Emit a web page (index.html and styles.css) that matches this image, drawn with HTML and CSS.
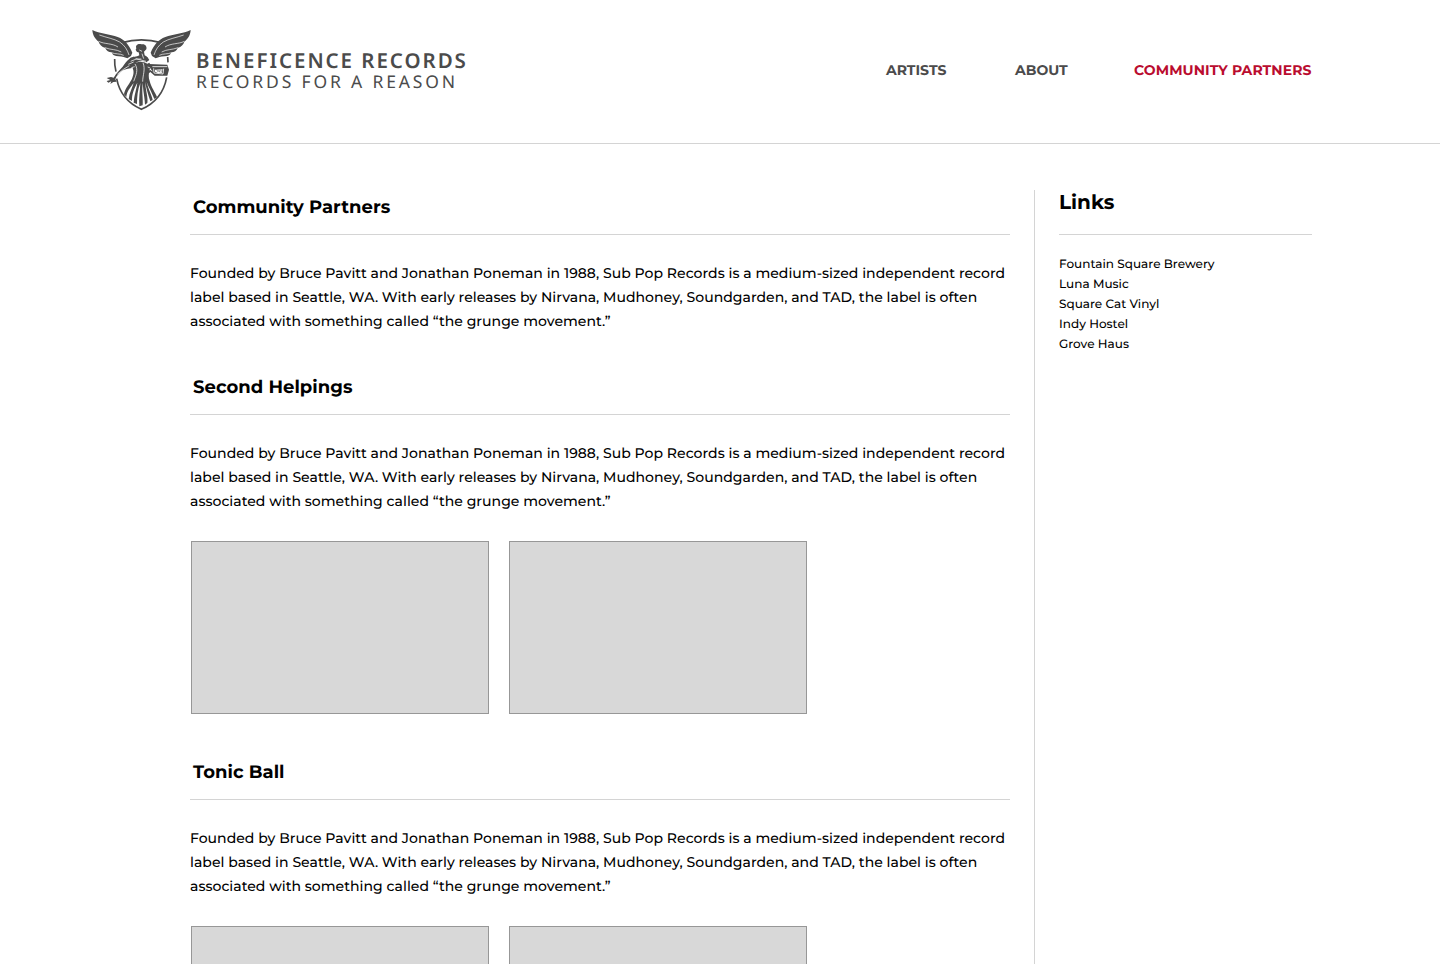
FILE: index.html
```html
<!DOCTYPE html>
<html lang="en">
<head>
<meta charset="utf-8">
<title>Beneficence Records</title>
<link rel="stylesheet" href="styles.css">
</head>
<body>
<header class="header">
  <div class="brand">
    <svg class="logo" viewBox="0 0 330 276" fill="#4b4b4b" aria-hidden="true">
      <defs>
        <g id="wing">
          <path d="M19 18 C40 29 72 30 95 39 C116 47 129 62 139 86 L135 96 L124 103 L113 99 C104 96 91 98 84 94 C80 92 78 88 76 85 C69 85 61 80 57 71 C48 69 40 61 38 53 C28 46 20 34 19 18Z"/>
          <path fill="none" stroke="#fff" stroke-width="2" d="M40 33 C62 41 84 44 101 54 C116 64 124 77 129 93 M38 52 C56 61 78 57 96 69 M57 71 C74 78 90 75 106 84 M76 86 C88 91 101 88 113 94"/>
        </g>
      </defs>
      <path fill="none" stroke="#4b4b4b" stroke-width="5" d="M108 56 Q166 39 225 56 M86 105 Q85 122 90 143 M92 164 C101 211 126 238 166 256 C207 238 234 204 242 160 M245 99 L246 115"/>
      <use href="#wing"/>
      <use href="#wing" transform="matrix(-1 0 0 1 333 0)"/>
      <path d="M151 73 C147 63 157 58 166 61 C177 58 184 67 181 76 L174 83 L176 94 C184 97 187 103 190 108 L181 115 C169 108 155 111 143 121 L138 132 L122 135 C109 137 99 148 91 158 L88 166 L92 173 L82 174 L73 180 L76 172 L67 176 L62 171 L73 168 L62 162 L75 159 L83 161 C92 146 102 137 110 128 C117 120 120 112 132 103 C139 97 152 99 160 94 L158 85 C151 86 151 79 149 77Z"/>
      <path fill="none" stroke="#fff" stroke-width="2.2" d="M160 78 L168 82 M168 89 L173 104 M134 112 Q151 102 166 105 M127 121 L143 114 M94 151 Q113 134 130 125 M149 104 L180 112"/>
      <path d="M136 123 C153 111 171 110 184 119 L190 116 L196 127 L190 139 C188 151 187 161 191 171 C195 189 209 208 213 219 L205 225 C197 204 188 190 182 174 C188 199 198 215 200 228 L193 232 C186 211 181 194 177 174 C179 199 187 222 184 237 L177 242 C176 216 170 198 171 176 C166 198 172 221 170 244 L160 247 C158 223 162 199 163 177 C155 196 153 219 153 240 L143 236 C145 212 151 197 154 176 C144 195 137 211 138 231 L128 225 C130 207 139 191 143 177 C132 191 122 204 121 219 L114 211 C116 193 134 176 139 161 C146 144 142 136 136 123Z"/>
      <path fill="none" stroke="#fff" stroke-width="2.2" d="M147 120 C158 138 150 153 143 172 M171 116 C179 136 170 154 170 173 M136 131 L146 128 M185 129 L193 132"/>
      <path d="M188 120 L244 122 L249 137 L244 155 L206 155 L193 144 L187 149 L190 138 L196 139Z"/>
      <path fill="none" stroke="#fff" stroke-width="2.5" d="M199 128 L244 128 M203 133 L204 147 L231 150 L233 134 M194 137 L199 141"/>
      <path fill="#fff" d="M207 137 L230 136 L227 147 L215 147 L207 143Z"/>
      <path fill="none" stroke="#4b4b4b" stroke-width="2" d="M212 137 L216 143 L219 139 L222 145 M224 137 L226 143"/>
    </svg>
    <div class="wordmark">
      <div class="name">BENEFICENCE RECORDS</div>
      <div class="tagline">RECORDS FOR A REASON</div>
    </div>
  </div>
  <nav class="nav">
    <a class="artists">ARTISTS</a>
    <a class="about">ABOUT</a>
    <a class="active">COMMUNITY PARTNERS</a>
  </nav>
</header>
<div class="page">
  <main class="main">
    <section>
      <h2>Community Partners</h2>
      <p>Founded by Bruce Pavitt and Jonathan Poneman in 1988, Sub Pop Records is a medium-sized independent record label based in Seattle, WA. With early releases by Nirvana, Mudhoney, Soundgarden, and TAD, the label is often associated with something called “the grunge movement.”</p>
    </section>
    <section>
      <h2>Second Helpings</h2>
      <p>Founded by Bruce Pavitt and Jonathan Poneman in 1988, Sub Pop Records is a medium-sized independent record label based in Seattle, WA. With early releases by Nirvana, Mudhoney, Soundgarden, and TAD, the label is often associated with something called “the grunge movement.”</p>
      <div class="gallery"><div class="photo"></div><div class="photo"></div></div>
    </section>
    <section>
      <h2>Tonic Ball</h2>
      <p>Founded by Bruce Pavitt and Jonathan Poneman in 1988, Sub Pop Records is a medium-sized independent record label based in Seattle, WA. With early releases by Nirvana, Mudhoney, Soundgarden, and TAD, the label is often associated with something called “the grunge movement.”</p>
      <div class="gallery"><div class="photo"></div><div class="photo"></div></div>
    </section>
  </main>
  <aside class="links">
    <h3>Links</h3>
    <ul>
      <li>Fountain Square Brewery</li>
      <li>Luna Music</li>
      <li>Square Cat Vinyl</li>
      <li>Indy Hostel</li>
      <li>Grove Haus</li>
    </ul>
  </aside>
</div>
</body>
</html>
```
FILE: styles.css
```css
* { box-sizing: border-box; }
body { margin: 0; height: 964px; overflow: hidden; background: #fff; color: #000; font-family: Montserrat, Inter, sans-serif; text-rendering: geometricPrecision; }
.header { height: 144px; border-bottom: 1px solid #d4d4d4; display: flex; justify-content: space-between; padding: 24px 128px 0 86px; white-space: nowrap; }
.brand { display: flex; }
.logo { width: 110px; height: 92px; display: block; }
.wordmark { font-family: "Noto Sans", sans-serif; color: #4b4b4b; padding-top: 25px; }
.name { font-size: 20.5px; font-weight: 600; line-height: 24px; letter-spacing: 1.95px; }
.tagline { font-size: 17.5px; line-height: 18px; letter-spacing: 2.84px; }
.nav { display: flex; height: 92px; align-items: center; font-size: 14px; font-weight: 700; color: #4b4b4b; }
.artists { width: 129px; }
.about { width: 119px; }
.active { width: 178px; color: #ba0c2f; letter-spacing: 0.08px; }
.page { display: flex; height: 820px; overflow: hidden; padding: 46px 128px 0 190px; }
.main { width: 844px; padding-right: 24px; }
section { margin-bottom: 37px; }
h2 { margin: 0; height: 45px; padding: 0 3px; border-bottom: 1px solid #d4d4d4; font-size: 18px; font-weight: 700; line-height: 34px; letter-spacing: 0.03px; }
p { margin: 26px 0 0; font-size: 14px; font-weight: 500; line-height: 24px; letter-spacing: 0.025px; }
.gallery { display: flex; gap: 20px; padding-left: 1px; margin: 28px 0 41px; }
.photo { width: 298px; height: 173px; background: #d8d8d8; border: 1px solid #979797; }
.links { width: 278px; padding-left: 24px; border-left: 1px solid #d4d4d4; }
h3 { margin: 0; height: 45px; border-bottom: 1px solid #d4d4d4; font-size: 20px; font-weight: 700; line-height: 26px; }
ul { list-style: none; margin: 20px 0 0; padding: 0; font-size: 12px; font-weight: 500; line-height: 20px; letter-spacing: 0.03px; }
```
